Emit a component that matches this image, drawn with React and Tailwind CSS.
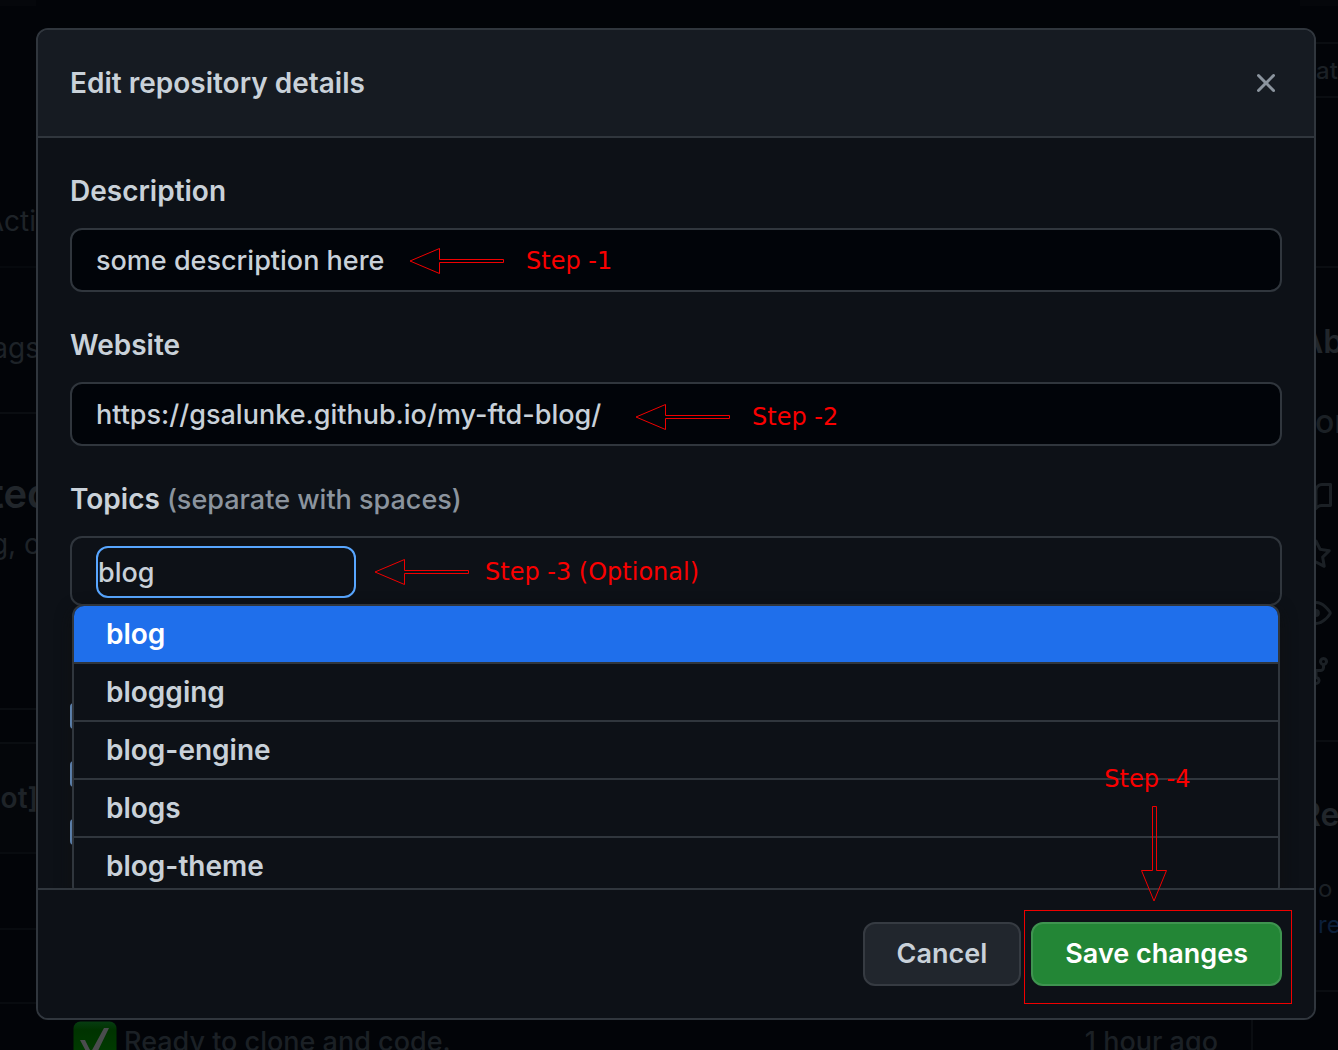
import React, { useState } from "react";

const ICONS = {
  close:
    "M3.72 3.72a.75.75 0 0 1 1.06 0L8 6.94l3.22-3.22a.749.749 0 0 1 1.275.326.749.749 0 0 1-.215.734L9.06 8l3.22 3.22a.749.749 0 0 1-.326 1.275.749.749 0 0 1-.734-.215L8 9.06l-3.22 3.22a.751.751 0 0 1-1.042-.018.751.751 0 0 1-.018-1.042L6.94 8 3.72 4.78a.75.75 0 0 1 0-1.06Z",
  book:
    "M0 1.75A.75.75 0 0 1 .75 1h4.253c1.227 0 2.317.59 3 1.501A3.743 3.743 0 0 1 11.006 1h4.245a.75.75 0 0 1 .75.75v10.5a.75.75 0 0 1-.75.75h-4.507a2.25 2.25 0 0 0-1.591.659l-.622.621a.75.75 0 0 1-1.06 0l-.622-.621A2.25 2.25 0 0 0 5.258 13H.75a.75.75 0 0 1-.75-.75Zm7.251 10.324.004-5.073-.002-2.253A2.25 2.25 0 0 0 5.003 2.5H1.5v9h3.757a3.75 3.75 0 0 1 1.994.574ZM8.755 4.75l-.004 7.322a3.752 3.752 0 0 1 1.992-.572H14.5v-9h-3.495a2.25 2.25 0 0 0-2.25 2.25Z",
  star:
    "M8 .25a.75.75 0 0 1 .673.418l1.882 3.815 4.21.612a.75.75 0 0 1 .416 1.279l-3.046 2.97.719 4.192a.751.751 0 0 1-1.088.791L8 12.347l-3.766 1.98a.75.75 0 0 1-1.088-.79l.72-4.194L.818 6.374a.75.75 0 0 1 .416-1.28l4.21-.611L7.327.668A.75.75 0 0 1 8 .25Zm0 2.445L6.615 5.5a.75.75 0 0 1-.564.41l-3.097.45 2.24 2.184a.75.75 0 0 1 .216.664l-.528 3.084 2.769-1.456a.75.75 0 0 1 .698 0l2.77 1.456-.53-3.084a.75.75 0 0 1 .216-.664l2.24-2.183-3.096-.45a.75.75 0 0 1-.564-.41L8 2.694Z",
  eye:
    "M8 2c1.981 0 3.671.992 4.933 2.078 1.27 1.091 2.187 2.345 2.637 3.023a1.62 1.62 0 0 1 0 1.798c-.45.678-1.367 1.932-2.637 3.023C11.67 13.008 9.981 14 8 14c-1.981 0-3.671-.992-4.933-2.078C1.797 10.83.88 9.576.43 8.898a1.62 1.62 0 0 1 0-1.798c.45-.677 1.367-1.931 2.637-3.022C4.33 2.992 6.019 2 8 2ZM1.679 7.932a.12.12 0 0 0 0 .136c.411.622 1.241 1.75 2.366 2.717C5.176 11.758 6.527 12.5 8 12.5c1.473 0 2.825-.742 3.955-1.715 1.124-.967 1.954-2.096 2.366-2.717a.12.12 0 0 0 0-.136c-.412-.621-1.242-1.75-2.366-2.717C10.824 4.242 9.473 3.5 8 3.5c-1.473 0-2.825.742-3.955 1.715-1.124.967-1.954 2.096-2.366 2.717ZM8 10a2 2 0 1 1-.001-3.999A2 2 0 0 1 8 10Z",
  fork:
    "M5 5.372v.878c0 .414.336.75.75.75h4.5a.75.75 0 0 0 .75-.75v-.878a2.25 2.25 0 1 1 1.5 0v.878a2.25 2.25 0 0 1-2.25 2.25h-1.5v2.128a2.251 2.251 0 1 1-1.5 0V8.5h-1.5A2.25 2.25 0 0 1 3.5 6.25v-.878a2.25 2.25 0 1 1 1.5 0ZM5 3.25a.75.75 0 1 0-1.5 0 .75.75 0 0 0 1.5 0Zm6.75.75a.75.75 0 1 0 0-1.5.75.75 0 0 0 0 1.5Zm-3 8.75a.75.75 0 1 0-1.5 0 .75.75 0 0 0 1.5 0Z",
};

function Octicon({ name, className = "" }) {
  return (
    <svg viewBox="0 0 16 16" aria-hidden="true" className={`size-8 shrink-0 fill-current ${className}`}>
      <path d={ICONS[name]} />
    </svg>
  );
}

function LeftArrow() {
  return (
    <svg width="96" height="28" viewBox="0 0 96 28" fill="none" stroke="#f00000" aria-hidden="true">
      <path d="M1 14 30.500 1.500V12.500H94.500V15.500H30.500V26.500Z" />
    </svg>
  );
}

function DownArrow() {
  return (
    <svg width="28" height="96" viewBox="0 0 28 96" fill="none" stroke="#f00000" aria-hidden="true">
      <path d="M14 95 1.500 64.500H12.500V.5H16.500V64.500H26.500Z" />
    </svg>
  );
}

function Step({ className, children }) {
  return (
    <div
      className={`pointer-events-none absolute flex items-center font-['DejaVu_Sans'] text-2xl whitespace-pre text-[#fa0000] ${className}`}
    >
      <LeftArrow />
      <span>{children}</span>
    </div>
  );
}

function LeftRail() {
  return (
    <div className="flex flex-col overflow-hidden whitespace-nowrap text-[#1e2328]">
      <div className="h-1.5 bg-[#05070b]" />
      <div className="flex h-[262px] items-end justify-end border-b-2 border-[#06090d] pb-6">Acti</div>
      <div className="flex h-[146px] items-center justify-end border-b-2 border-[#0a0d11] pt-4">
        <span className="-mr-1">ags</span>
      </div>
      <div className="flex h-[296px] flex-col items-end border-b-2 border-[#0a0d11] pt-14">
        <span className="-mr-4 text-[40px] leading-[48px] font-semibold text-[#21262b]">ted</span>
        <span className="-mr-1 leading-[52px]">g, c</span>
      </div>
      <div className="h-[34px] border-b-2 border-[#0a0d11]" />
      <div className="flex h-[110px] items-center justify-end border-b-2 border-[#080b0f] bg-[#04060a] font-semibold">
        <span className="-mr-0.5">ot]</span>
      </div>
      <div className="h-[76px] border-b-2 border-[#080b0f]" />
      <div className="h-[74px] border-b-2 border-[#080b0f]" />
    </div>
  );
}

function RightRail() {
  return (
    <div className="flex flex-col overflow-hidden whitespace-nowrap text-[#1b2025]">
      <div className="h-1.5 bg-[#05070b]" />
      <div className="mt-9 flex h-14 items-center border-y-2 border-[#0a0d11] pt-0.5 pl-4 text-2xl font-medium">
        at
      </div>
      <div className="h-[170px] border-b-2 border-[#0a0d11]" />
      <div className="flex h-[474px] flex-col border-b-2 border-[#0a0d11] pt-[50px]">
        <span className="text-[32px] leading-[48px] font-semibold text-[#21262b]">Ab</span>
        <span className="mt-7 pl-[15px] text-[32px] leading-[56px] font-medium">or</span>
        <Octicon name="book" className="mt-[31px]" />
        <Octicon name="star" className="mt-[26px]" />
        <Octicon name="eye" className="mt-[26px]" />
        <Octicon name="fork" className="mt-[26px]" />
      </div>
      <div className="flex h-[250px] flex-col border-b-2 border-[#0a0d11] pt-[49px]">
        <span className="text-[32px] leading-[48px] font-semibold text-[#21262b]">Re</span>
        <span className="mt-8 pl-[18px] text-2xl leading-9">o</span>
        <span className="pl-[18px] text-2xl leading-9 text-[#0c1f3a]">re</span>
      </div>
    </div>
  );
}

function Backdrop() {
  return (
    <div
      aria-hidden="true"
      className="col-start-1 row-start-1 grid h-full grid-cols-[36px_1fr_38px] overflow-hidden bg-[#020408] text-[28px] select-none"
    >
      <LeftRail />
      <div className="flex flex-col justify-end text-[#1b2025]">
        <div className="flex h-8 items-start overflow-hidden pl-[37px] text-[27px]">
          <svg width="44" height="44" viewBox="0 0 44 44" className="mt-[3px] shrink-0">
            <defs>
              <linearGradient id="tick" x1="0" y1="0" x2="0" y2="1">
                <stop offset="0" stopColor="#073c12" />
                <stop offset=".2" stopColor="#003300" />
                <stop offset="1" stopColor="#003f00" />
              </linearGradient>
            </defs>
            <rect x=".5" y=".5" width="43" height="43" rx="7" fill="url(#tick)" />
            <path d="M7 19h5l6 12L31 7h5L21 38h-4Z" fill="#4a4c4e" />
          </svg>
          <span className="pl-[7px] leading-[48px] font-[450]">Ready to clone and code.</span>
          <span className="ml-auto pr-[33px] leading-[48px] font-[450]">1 hour ago</span>
          <div className="mr-[47px] h-full w-0.5 bg-[#0a0d11]" />
        </div>
      </div>
      <RightRail />
    </div>
  );
}

function TextField({ id, label, value, children }) {
  const [text, setText] = useState(value);
  return (
    <div>
      <label htmlFor={id} className="block leading-[42px] font-semibold">
        {label}
      </label>
      <div className="relative mt-4">
        <input
          id={id}
          type="text"
          value={text}
          onChange={(e) => setText(e.target.value)}
          className="block h-16 w-full rounded-xl border-2 border-[#30363d] bg-[#010409] px-6 text-[27px] font-[450] outline-none"
        />
        {children}
      </div>
    </div>
  );
}

const SUGGESTIONS = ["blog", "blogging", "blog-engine", "blogs", "blog-theme"];

function TopicsField() {
  const [text, setText] = useState("blog");
  return (
    <div className="relative">
      <label htmlFor="topics" className="block h-[42px] leading-[42px] font-semibold">
        Topics <span className="text-[27px] font-[450] text-[#8b949e]">(separate with spaces)</span>
      </label>
      <div className="relative mt-4 h-[70px] rounded-xl border-2 border-[#30363d] px-6 py-2">
        <input
          id="topics"
          type="text"
          value={text}
          onChange={(e) => setText(e.target.value)}
          className="block h-[52px] w-[260px] rounded-xl border-2 border-[#58a6ff] bg-transparent text-[27px] font-[450] outline-none"
        />
        <Step className="top-[18px] left-[302px] gap-[15px]">Step -3 (Optional)</Step>
      </div>
      <div className="mt-[97px] flex flex-col gap-8" aria-hidden="true">
        <div className="h-[26px] w-6 rounded-sm bg-[#7fb2f0]" />
        <div className="h-[26px] w-6 rounded-sm bg-[#7fb2f0]" />
        <div className="h-[26px] w-6 rounded-sm bg-[#7fb2f0]" />
      </div>
      <ul className="absolute inset-x-0.5 top-[126px] overflow-hidden rounded-xl border-2 border-[#30363d] bg-[#0d1117] font-semibold shadow-[0_6px_16px_rgba(16,16,16,0.7)]">
        {SUGGESTIONS.map((name, i) => (
          <li
            key={name}
            className={
              i === 0
                ? "border-b-2 border-[#30363d] bg-[#1f6feb] text-white"
                : "border-b-2 border-[#30363d]"
            }
          >
            <button type="button" className="block h-14 w-full px-8 text-left">
              {name}
            </button>
          </li>
        ))}
      </ul>
    </div>
  );
}

export default function App() {
  return (
    <div className="grid h-screen grid-rows-[minmax(0,1fr)] bg-[#020408] font-[Inter,sans-serif]">
      <Backdrop />
      <div className="z-10 col-start-1 row-start-1 flex min-h-0 pt-7 pr-[22px] pb-[30px] pl-9">
        <div
          role="dialog"
          aria-labelledby="title"
          className="flex min-h-0 flex-1 flex-col overflow-hidden rounded-xl border-2 border-[#30363d] bg-[#0d1117] text-[28px] text-[#c9d1d9]"
        >
          <header className="flex items-center justify-between border-b-2 border-[#30363d] bg-[#161b22] px-8 py-8">
            <h1 id="title" className="leading-[42px] font-semibold">
              Edit repository details
            </h1>
            <button type="button" aria-label="Close" className="text-[#8b949e]">
              <Octicon name="close" />
            </button>
          </header>
          <div className="flex min-h-0 flex-1 flex-col gap-8 overflow-hidden px-8 pt-8">
            <TextField id="description" label="Description" value="some description here">
              <Step className="top-[17px] left-[339px] gap-[21px]">Step -1</Step>
            </TextField>
            <TextField id="website" label="Website" value="https://gsalunke.github.io/my-ftd-blog/">
              <Step className="top-[19px] left-[565px] gap-[21px]">Step -2</Step>
            </TextField>
            <TopicsField />
          </div>
          <footer className="flex shrink-0 justify-end gap-2.5 border-t-2 border-[#30363d] bg-[#0d1117] p-8 text-[27px] font-semibold">
            <button
              type="button"
              className="h-16 rounded-xl border-2 border-[#363b42] bg-[#21262d] px-8"
            >
              Cancel
            </button>
            <div className="relative">
              <button
                type="button"
                className="h-16 rounded-xl border-2 border-[#3f9450] bg-[#238636] px-8 text-white"
              >
                Save changes
              </button>
              <div className="pointer-events-none absolute -top-3 -right-2.5 -bottom-[18px] -left-[7px] border border-[#f00000]" />
              <div className="pointer-events-none absolute bottom-[84px] left-[73px] flex flex-col items-start font-['DejaVu_Sans'] text-2xl font-normal whitespace-nowrap text-[#fa0000]">
                <span>Step -4</span>
                <div className="mt-[11px] ml-9">
                  <DownArrow />
                </div>
              </div>
            </div>
          </footer>
        </div>
      </div>
    </div>
  );
}
